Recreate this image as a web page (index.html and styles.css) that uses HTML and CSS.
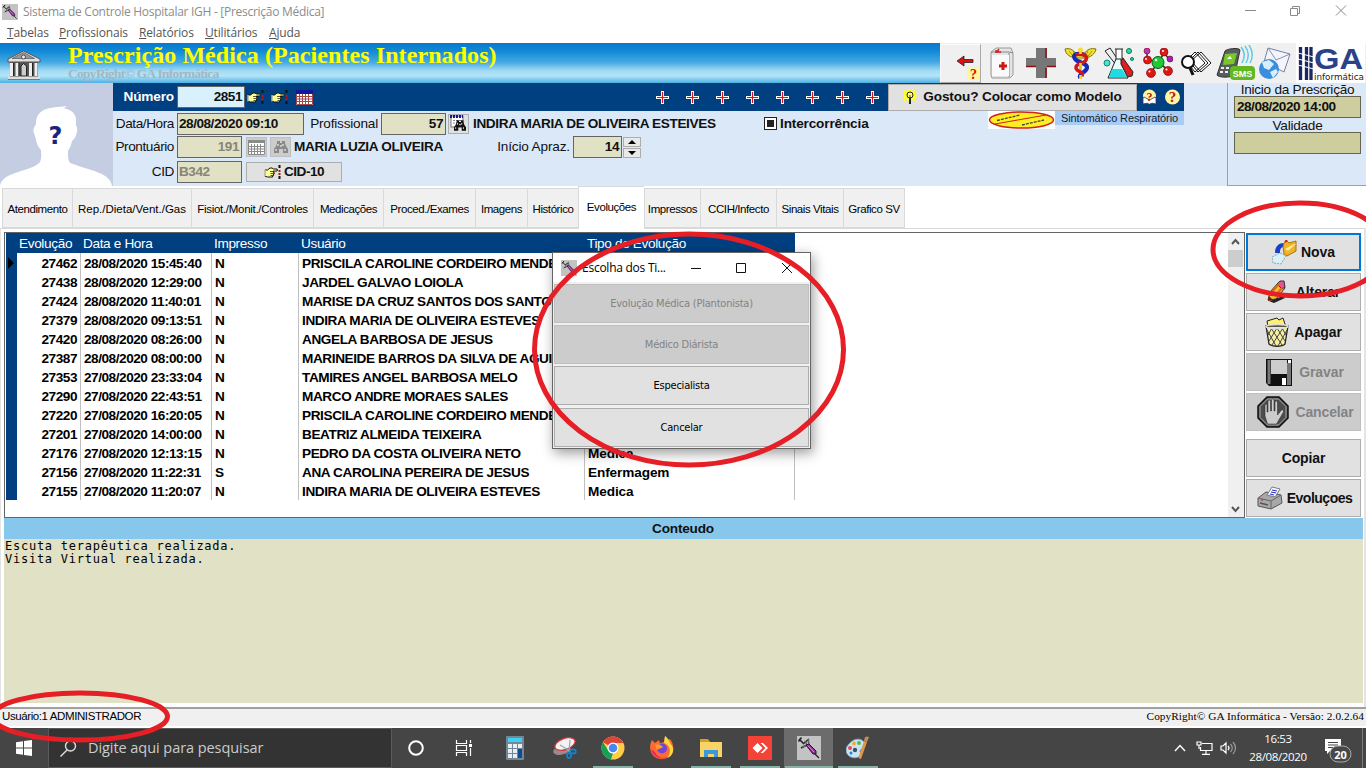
FILE: index.html
```
<!DOCTYPE html>
<html lang="pt-BR">
<head>
<meta charset="utf-8">
<title>Sistema de Controle Hospitalar IGH</title>
<link rel="stylesheet" href="styles.css">
</head>
<body>
<svg class="defs" width="0" height="0">
  <defs>
    <symbol id="syringe" viewBox="0 0 24 24">
      <rect width="24" height="24" fill="#c3c3c3"/>
      <path d="M2 3l5 5M4.500 1.500l-3 4M6 8l6-5M4 12l6-3" stroke="#222" stroke-width="1.500" fill="none"/>
      <path d="M8 5l2 4-5 2M11 3l1 5" stroke="#666" stroke-width="1.600" fill="none"/>
      <path d="M9 9l3-1 7 7v3h-3z" fill="#8b2f9b" stroke="#2a1030" stroke-width="1"/>
      <path d="M11 9.500l6 6.500" stroke="#e58bd8" stroke-width="1"/>
      <path d="M18 18l4 4" stroke="#222" stroke-width="1.200"/>
    </symbol>
    <symbol id="hand" viewBox="0 0 17 14">
      <path d="M1 5h2.500L6 3h2l1.500 1H13l.5 1-.5 1H9.500v1.500h.7v1.500h-.7v1.500h-.8V12H3.500L2 11.500H1z" fill="#ffff90" stroke="#111" stroke-width="1"/>
      <path d="M6 6.500h3M6.500 8.500h3M6.500 10.500h2" stroke="#111" stroke-width=".7"/>
      <path d="M1 5v6.500" stroke="#fff"/>
      <path d="M15.500 0v4M15.500 11v3" stroke="#111" stroke-width="2" stroke-dasharray="3 1"/>
      <path d="M15.500 5v5" stroke="#b01818" stroke-width="2" stroke-dasharray="2 1"/>
    </symbol>
    <symbol id="plus" viewBox="0 0 13 13">
      <path d="M5 0h3v5h5v3H8v5H5V8H0V5h5z" fill="#fff"/>
      <path d="M6.500 1v11M1 6.500h11" stroke="#d01820" stroke-width="1.200"/>
    </symbol>
    <symbol id="calendar" viewBox="0 0 17 15">
      <rect width="17" height="15" fill="#fff"/>
      <path d="M.5 3v11.500h16V3M.5 6.500h16M.5 9h16M.5 11.500h16M3.500 4v10.500M6.500 4v10.500M9.500 4v10.500M12.500 4v10.500" stroke="currentColor" fill="none"/>
      <path d="M0 1.500h17" stroke="currentColor" stroke-width="3"/>
    </symbol>
    <symbol id="binoc" viewBox="0 0 14 12">
      <path d="M3 0h3v2h2V0h3v2l1 3 2 3v4H9V8H5v4H0V8l2-3 1-3z" fill="currentColor"/>
      <path d="M2 8v2M11 8v2M4 3v2M9 3v2M6 5h2" stroke="#fff" stroke-width="1"/>
    </symbol>
  </defs>
</svg>

<div class="titlebar">
  <svg class="app-icon" width="16" height="16"><use href="#syringe"/></svg>
  <span class="app-title">Sistema de Controle Hospitalar IGH - [Prescrição Médica]</span>
  <svg class="win-buttons" width="110" height="14" fill="none" stroke="#8a8a8a">
    <path d="M2 7.500h11M47.500 5.500h7v7h-7zM49.500 5.500v-2h7v7h-2M93 2.500l10 10M103 2.500l-10 10"/>
  </svg>
</div>
<nav class="menubar">
  <span class="m1"><u>T</u>abelas</span><span class="m2"><u>P</u>rofissionais</span><span class="m3"><u>R</u>elatórios</span><span class="m4"><u>U</u>tilitários</span><span class="m5"><u>A</u>juda</span>
</nav>

<div class="banner">
  <div class="banner-title">
    <svg class="building" width="34" height="30" viewBox="0 0 34 30">
      <path d="M1 9L16.500 1 33 9v3H1z" fill="#e0e0e0" stroke="#555"/>
      <path d="M5 8.500l11.500-6 11 6z" fill="#999" stroke="#444" stroke-width=".6"/>
      <circle cx="16.500" cy="7" r="2" fill="#eee" stroke="#333" stroke-width=".8"/>
      <rect x="3" y="12" width="28" height="15" fill="#555"/>
      <path d="M4.500 13v13M10 13v13M23.500 13v13M29 13v13" stroke="#eee" stroke-width="3"/>
      <path d="M6.500 13v13M12 13v13M25.500 13v13" stroke="#222"/>
      <path d="M14 26V16l2.500-2.500L19.500 16v10z" fill="#ccc" stroke="#222"/>
      <path d="M1 28h32" stroke="#ddd" stroke-width="3"/><path d="M1 29.500h32" stroke="#777"/>
    </svg>
    <div class="banner-text">
      <h1>Prescrição Médica (Pacientes Internados)</h1>
      <p>CopyRight© GA Informática</p>
    </div>
  </div>
  <div class="toolbar">
    <div class="help-btn">
      <svg width="40" height="38" viewBox="0 0 40 38">
        <path d="M16 16l7-5v3.500h9v3h-9V21z" fill="#e01010" stroke="#222" stroke-width=".8"/>
        <rect x="26" y="22" width="13" height="13" fill="#fff59a"/>
        <text x="29" y="34" class="q-serif">?</text>
      </svg>
    </div>
    <svg class="tool bag" width="26" height="32" viewBox="0 0 26 32">
      <path d="M2 5l5-4h15l2 5v22l-3 3H3l-1-3z" fill="#e4e4e4" stroke="#999"/>
      <path d="M2 5h18l4 1M20 6v24" stroke="#888" fill="none"/><path d="M3 8h17v21H3z" fill="#fafafa"/>
      <path d="M8 5l2-3M7 3v3M7 5h5" stroke="#c22" stroke-width="1.500"/>
      <path d="M14 15v8M10 19h8" stroke="#d01515" stroke-width="3"/>
    </svg>
    <svg class="tool cross" width="30" height="30" viewBox="0 0 30 30">
      <path d="M10 0h11v10h9v9H21v11H10V19H0v-9h10z" fill="#777"/>
      <path d="M20 0v10M0 18.500h10M20 20v10M21 18.500h9" stroke="#8b1010" stroke-width="1.500"/>
    </svg>
    <svg class="tool caduceus" width="33" height="33" viewBox="0 0 33 33" fill="none">
      <path d="M1 2c4-1 8 0 11 5l4 2 4-2c3-5 7-6 12-5-1 5-5 8-11 9H12C6 10 2 8 1 2z" fill="#f4e32a" stroke="#7a7000"/>
      <path d="M5 4l4 5M9 4l3 6M28 4l-4 5M24 4l-3 6" stroke="#8a8000" stroke-width=".8"/>
      <path d="M16.500 2v30" stroke="#d8b820" stroke-width="2.500"/>
      <path d="M21 8c-9-3-13 0-10 4s13 4 12 9-9 5-7 10" stroke="#1828b8" stroke-width="4"/>
      <path d="M12 8c7-3 12 1 10 5s-11 3-10 8 9 3 6 8" stroke="#d01818" stroke-width="3.500"/>
      <path d="M16.500 4v3M16.500 16v3M16.500 28v4" stroke="#f4dc30" stroke-width="2.500"/>
      <circle cx="16.500" cy="3" r="2.500" fill="#f4dc30"/>
    </svg>
    <svg class="tool flask" width="32" height="32" viewBox="0 0 32 32">
      <path d="M2 4l5-3 17 25-2 3z" fill="#eee" stroke="#222"/>
      <path d="M16 12l4-1 10 14-1 4-5 1z" fill="#e02020" stroke="#222"/>
      <path d="M12 2h8M13 2v11h6V2" fill="#fff" stroke="#222"/>
      <path d="M13 12L5 31h20L18 17v-5z" fill="#e8ffff" stroke="#222"/>
      <path d="M9 22l-3 8h18l-5-8z" fill="#20dce0"/>
      <circle cx="26" cy="4" r="2.500" fill="#30d8a0" stroke="#087858"/><circle cx="4" cy="16" r="3" fill="#50e0d0" stroke="#088878"/><circle cx="29" cy="12" r="1.500" fill="#30d8a0" stroke="#087858"/>
    </svg>
    <svg class="tool molecule" width="30" height="30" viewBox="0 0 30 30">
      <path d="M4 4v7l11 4 6-10M15 15L8 24M15 15l11 7M21 5l5 6" stroke="#333" fill="none" stroke-width="1.500"/>
      <g stroke="#700" stroke-width=".6"><circle cx="4" cy="3" r="3" fill="#c030c8"/><circle cx="4.500" cy="12" r="4" fill="#e01818"/><circle cx="21" cy="4" r="4" fill="#e01818"/><circle cx="27" cy="11" r="3" fill="#a020c0"/><circle cx="8" cy="25" r="4.500" fill="#d81818"/><circle cx="25" cy="23" r="4.500" fill="#d81818"/></g>
      <circle cx="15" cy="14.500" r="6" fill="#20c838" stroke="#086010"/>
      <g fill="#fff"><circle cx="13" cy="12" r="1.300"/><circle cx="3" cy="11" r="1"/><circle cx="20" cy="3" r="1"/><circle cx="6.500" cy="23.500" r="1"/><circle cx="23.500" cy="21.500" r="1"/></g>
    </svg>
    <svg class="tool papers" width="31" height="27" viewBox="0 0 31 27" fill="#fff" stroke="#111">
      <path d="M20 2l10 11-10 9L10 11zM17 2l10 11-10 9L8 11zM14 2l10 11-10 9L5 11z"/>
      <circle cx="7" cy="12" r="6" stroke-width="2"/><path d="M9 18l3 7" stroke-width="3"/>
    </svg>
    <svg class="tool sms" width="40" height="36" viewBox="0 0 40 36">
      <path d="M9 6c1-2 14-4 15-1l-5 24c-2 4-16 4-18 1z" fill="#555d60" stroke="#333"/>
      <path d="M9 9l12-1-3 11-11 1z" fill="#7ac828"/><path d="M11 14l3-3 2 3z" fill="#fff"/>
      <path d="M5 23h3M10 23h3M4 27h3M9 27h3" stroke="#eee" stroke-width="2"/>
      <path d="M25 2q6 7 1 16M29 1q6 8 1 17M33 0q6 9 1 18" fill="none" stroke="#62cbe4" stroke-width="1.500"/>
      <rect x="14" y="21" width="25" height="14" rx="4" fill="#62b820"/>
      <text x="26.500" y="32" class="sms-text">SMS</text>
    </svg>
    <svg class="tool mail" width="33" height="33" viewBox="0 0 33 33">
      <path d="M10 1l22 6-6 18L6 15z" fill="#f4f4fc" stroke="#7780a0"/><path d="M10 1l8 12 14-6" fill="none" stroke="#8890b0"/>
      <circle cx="11" cy="22" r="10" fill="#3b8dde"/><path d="M4 15l7-2 5 4-5 6-5-2zM12 25l6-3 2 3-5 6z" fill="#d8eefa"/>
    </svg>
    <svg class="tool ga" width="69" height="40" viewBox="0 0 69 40">
      <rect width="69" height="40" fill="#fff"/>
      <path d="M4.500 4v33M10.500 4v33M15 4v33" stroke="#1c2860" stroke-width="3.300"/>
      <path d="M2 10l16 4M2 16l16 4M2 22l16 4" stroke="#fff"/>
      <text x="18" y="26" class="ga-text" textLength="49" lengthAdjust="spacingAndGlyphs">GA</text>
      <text x="18" y="37" class="ga-sub" textLength="50" lengthAdjust="spacingAndGlyphs">informática</text>
    </svg>
  </div>
</div>

<header class="patient">
  <div class="photo">
    <svg width="113" height="103" viewBox="0 0 113 103">
      <rect width="113" height="103" fill="#c4cde1"/>
      <path d="M0 103c2-15 32-14 40-24 2-4 1-9 1-12-5-5-5-12-6-14-3-7-1-8 1-12C36 32 40 25 58 24l9-1-3 2c10 3 13 7 12 17 3 5 0 13-4 16-1 5-3 8-4 10 0 8 0 12 5 13 16 6 38 9 39 22z" fill="#fff"/>
      <text x="55.500" y="61" class="photo-q">?</text>
    </svg>
  </div>
  <div class="form">
    <div class="number-bar">
      <label class="lbl bold">Número</label>
      <div class="field cyan num">2851</div>
      <svg class="hand1" width="17" height="14"><use href="#hand"/></svg>
      <svg class="hand2" width="17" height="14"><use href="#hand"/></svg>
      <svg class="cal1" width="17" height="15"><use href="#calendar"/><rect width="17" height="4" fill="#1018a0"/></svg>
      <div class="plusses">
        <svg width="13" height="13"><use href="#plus"/></svg><svg width="13" height="13"><use href="#plus"/></svg><svg width="13" height="13"><use href="#plus"/></svg><svg width="13" height="13"><use href="#plus"/></svg><svg width="13" height="13"><use href="#plus"/></svg><svg width="13" height="13"><use href="#plus"/></svg><svg width="13" height="13"><use href="#plus"/></svg><svg width="13" height="13"><use href="#plus"/></svg>
      </div>
      <button class="model-btn">
        <svg width="14" height="16" viewBox="0 0 14 16"><path d="M7 0l2 2 3-1v3l2 3-2 2v3L9 11 7 13 4 11 1 12V9L0 7l1-3V1l3 1z" fill="#ffff30"/><circle cx="7" cy="6" r="3" fill="#ffff80" stroke="#222"/><path d="M7 9v6" stroke="#222" stroke-width="2"/><path d="M7 6v3" stroke="#222" stroke-width=".8"/></svg>
        <span>Gostou? Colocar como Modelo</span>
      </button>
      <svg class="tip" width="38" height="16" viewBox="0 0 38 16">
        <circle cx="7.500" cy="7" r="6.500" fill="#fff6a0"/><path d="M1 9l1-1 5.500 3L13 8l1 1v6l-4-.8-2.500 1-2.500-1L1 15z" fill="#fff" stroke="#335" stroke-width=".8"/>
        <circle cx="30.500" cy="8" r="7.500" fill="#fff6a0"/>
        <text x="7.500" y="11.500" class="tip-q small">?</text><text x="30.500" y="13" class="tip-q big">?</text>
      </svg>
    </div>
    <div class="form-body">
      <div class="row row-date">
        <label class="lbl">Data/Hora</label><div class="field date">28/08/2020 09:10</div>
        <label class="lbl prof">Profissional</label><div class="field prof-f">57</div>
        <div class="mini-btn"><svg width="18" height="17" viewBox="0 0 18 17"><rect x="1" y="1" width="12" height="11" fill="#fff" stroke="#777"/><path d="M0 1.500h13" stroke="#1018a0" stroke-width="3" stroke-dasharray="2 1"/><path d="M3 5.500h9M3 8h9" stroke="#888" stroke-dasharray="2 1"/><svg x="4" y="5" width="12" height="11"><use href="#binoc"/></svg></svg></div>
        <span class="name">INDIRA MARIA DE OLIVEIRA ESTEIVES</span>
        <span class="check"></span><span class="inter">Intercorrência</span>
      </div>
      <div class="row row-pront">
        <label class="lbl">Prontuário</label><div class="field off pront">191</div>
        <div class="mini-btn dis"><svg width="17" height="15"><use href="#calendar"/></svg></div>
        <div class="mini-btn dis second"><svg width="14" height="12"><use href="#binoc"/></svg></div>
        <span class="name patient-name">MARIA LUZIA OLIVEIRA</span>
        <label class="lbl apraz">Início Apraz.</label><div class="field ap-f">14</div>
        <div class="spin"><i class="up"></i><i class="down"></i></div>
      </div>
      <div class="row row-cid">
        <label class="lbl">CID</label><div class="field off cid">B342</div>
        <button class="cid-btn"><svg width="17" height="14"><use href="#hand"/></svg><span>CID-10</span></button>
      </div>
      <div class="resp">
        <svg width="67" height="18" viewBox="0 0 67 18"><rect width="67" height="18" fill="#fff"/><ellipse cx="33.500" cy="9" rx="32" ry="8" fill="#ffee20" stroke="#d02020" stroke-width="1.500"/><path d="M7 13L58 4" stroke="#d02020"/><path d="M9 9.500L32 4M34 14l22-5" stroke="#444" stroke-width="1.300" stroke-dasharray="3 1"/></svg>
        <span>Sintomático Respiratório</span>
      </div>
    </div>
  </div>
  <aside class="period">
    <p>Inicio da Prescrição</p><div class="khaki">28/08/2020 14:00</div>
    <p class="val">Validade</p><div class="khaki"></div>
  </aside>
</header>

<div class="tabs">
  <div class="tab w70">Atendimento</div><div class="tab w119">Rep./Dieta/Vent./Gas</div><div class="tab w122">Fisiot./Monit./Controles</div><div class="tab w70b">Medicações</div><div class="tab w92">Proced./Exames</div><div class="tab w52">Imagens</div><div class="tab w51">Histórico</div><div class="tab active">Evoluções</div><div class="tab w56">Impressos</div><div class="tab w76">CCIH/Infecto</div><div class="tab w67">Sinais Vitais</div><div class="tab w61">Grafico SV</div>
</div>

<main class="page">
  <div class="upper">
    <div class="gridbox">
      <table class="evolutions">
        <thead><tr><th class="gut"></th><th class="c1">Evolução</th><th class="c2">Data e Hora</th><th class="c3">Impresso</th><th class="c4">Usuário</th><th class="c5">Tipo de Evolução</th></tr></thead>
        <tbody>
          <tr><td class="gut"><i></i></td><td>27462</td><td>28/08/2020 15:45:40</td><td>N</td><td>PRISCILA CAROLINE CORDEIRO MENDES</td><td></td></tr>
          <tr><td class="gut"></td><td>27438</td><td>28/08/2020 12:29:00</td><td>N</td><td>JARDEL GALVAO LOIOLA</td><td></td></tr>
          <tr><td class="gut"></td><td>27424</td><td>28/08/2020 11:40:01</td><td>N</td><td>MARISE DA CRUZ SANTOS DOS SANTOS</td><td></td></tr>
          <tr><td class="gut"></td><td>27379</td><td>28/08/2020 09:13:51</td><td>N</td><td>INDIRA MARIA DE OLIVEIRA ESTEVES</td><td></td></tr>
          <tr><td class="gut"></td><td>27420</td><td>28/08/2020 08:26:00</td><td>N</td><td>ANGELA BARBOSA DE JESUS</td><td></td></tr>
          <tr><td class="gut"></td><td>27387</td><td>28/08/2020 08:00:00</td><td>N</td><td>MARINEIDE BARROS DA SILVA DE AGUIAR</td><td></td></tr>
          <tr><td class="gut"></td><td>27353</td><td>27/08/2020 23:33:04</td><td>N</td><td>TAMIRES ANGEL BARBOSA MELO</td><td></td></tr>
          <tr><td class="gut"></td><td>27290</td><td>27/08/2020 22:43:51</td><td>N</td><td>MARCO ANDRE MORAES SALES</td><td></td></tr>
          <tr><td class="gut"></td><td>27220</td><td>27/08/2020 16:20:05</td><td>N</td><td>PRISCILA CAROLINE CORDEIRO MENDES</td><td></td></tr>
          <tr><td class="gut"></td><td>27201</td><td>27/08/2020 14:00:00</td><td>N</td><td>BEATRIZ ALMEIDA TEIXEIRA</td><td></td></tr>
          <tr><td class="gut"></td><td>27176</td><td>27/08/2020 12:13:15</td><td>N</td><td>PEDRO DA COSTA OLIVEIRA NETO</td><td>Medica</td></tr>
          <tr><td class="gut"></td><td>27156</td><td>27/08/2020 11:22:31</td><td>S</td><td>ANA CAROLINA PEREIRA DE JESUS</td><td>Enfermagem</td></tr>
          <tr><td class="gut"></td><td>27155</td><td>27/08/2020 11:20:07</td><td>N</td><td>INDIRA MARIA DE OLIVEIRA ESTEVES</td><td>Medica</td></tr>
        </tbody>
      </table>
      <div class="scroll">
        <svg width="15" height="16" fill="none" stroke="#555" stroke-width="2"><path d="M4 11l3.500-4 3.500 4"/></svg>
        <div class="thumb"></div>
        <svg class="dn" width="15" height="16" fill="none" stroke="#555" stroke-width="2"><path d="M4 6l3.500 4L11 6"/></svg>
      </div>
    </div>
    <div class="actions">
      <button class="focus"><svg width="25" height="25" viewBox="0 0 25 25"><path d="M3 13c0-7 4-10 9-10v4c-3 0-4 2-4 6z" fill="#1840c8"/><path d="M11 6l1-3 3-2 2 2 7-2v10l-9 5-3-2z" fill="#f0b428" stroke="#a87010"/><path d="M13 9l9-5 2 0-8 7z" fill="#ffe898"/><path d="M13 2l2-2" stroke="#d02020" stroke-width="2"/><path d="M0 17l8-4 6 3-5 8-8-1z" fill="#d8f0f8" stroke="#88a8b0" stroke-dasharray="2 1"/></svg><span>Nova</span></button>
      <button class="alt"><svg width="19" height="24" viewBox="0 0 19 24"><path d="M2 21l14-5 2 2-11 5z" fill="#222"/><path d="M1 20L3 12 11 3h5l2 5-9 11z" fill="#f0c030" stroke="#333"/><path d="M10 4l3-3h4l1 6-3 2z" fill="#e85090" stroke="#333"/><path d="M5 12l7-8M8 16l7-8" stroke="#e06818" stroke-width="2"/><path d="M1 21l1-5 4 4z" fill="#7b1b10"/></svg><span>Alterar</span></button>
      <button><svg width="25" height="31" viewBox="0 0 25 31"><path d="M3 10L2 4l10-3 2 2 4-2 3 9z" fill="#fff070" stroke="#222"/><path d="M1 9h22l-3 18c-3 3-13 3-16 0z" fill="#f4f0a0" stroke="#222" stroke-width="1.300"/><path d="M2 13l9 16M6 11l11 17M12 11l8 13M17 11l4 7M22 13l-9 16M18 11L7 28M12 11L4 24M7 11l-4 7" stroke="#444" stroke-width="1"/><ellipse cx="12" cy="9.500" rx="11" ry="2" fill="none" stroke="#ddd" stroke-width="1.500"/></svg><span>Apagar</span></button>
      <button class="off save"><svg width="26" height="27" viewBox="0 0 26 27"><path d="M0 0h26v27H3l-3-3z" fill="#111"/><path d="M1.500 1h3v24h-3zM21 4h4v22h-4z" fill="#777"/><path d="M5 1h16v14H5z" fill="#ccc"/><rect x="22" y="1" width="3" height="3" fill="#fff"/><rect x="16" y="19" width="4" height="7" fill="#fff"/></svg><span>Gravar</span></button>
      <button class="off stop"><svg width="32" height="32" viewBox="0 0 32 32"><path d="M10 1h12l9 9v12l-9 9H10l-9-9V10z" fill="#4c4c4c" stroke="#111" stroke-width="1.500"/><path d="M10.500 3h11l7.500 7.500v11L21.500 29h-11L3 21.500v-11z" fill="none" stroke="#aaa"/><path d="M8 20V9q1-2 2 0v7h1V5q1-2 2.500 0v10h1V4q1-2 2.500 0v11h1V6q1-2 2.500 0v13l4-5q3-1 2 2l-7 12h-9z" fill="#ccc" stroke="#222" stroke-width=".5"/></svg><span>Cancelar</span></button>
      <button class="copy"><span>Copiar</span></button>
      <button class="print"><svg width="26" height="24" viewBox="0 0 26 24"><path d="M1 12l8-6 15 3 1 8-11 6L1 20z" fill="#a8a8a8" stroke="#555"/><path d="M1 12l13 3 10-6M14 15v8" stroke="#666" fill="none"/><path d="M10 9l5-8 8 2-5 8z" fill="#fff" stroke="#778"/><path d="M14 6l5 1M15 4l5 1M13 8l4 1" stroke="#2030c8" stroke-width="1.200"/><path d="M3 17l8 2" stroke="#555" stroke-width="1.500"/><path d="M4 14h2" stroke="#c22"/></svg><span>Evoluçoes</span></button>
    </div>
  </div>
  <div class="content-head">Conteudo</div>
  <pre class="memo">Escuta terapêutica realizada.
Visita Virtual realizada.</pre>
</main>

<footer class="status"><span>Usuário:1 ADMINISTRADOR</span><span class="ver">CopyRight© GA Informática - Versão: 2.0.2.64</span></footer>

<div class="taskbar">
  <div class="start"><svg width="16" height="16" fill="#fff"><path d="M0 2.200l7-1V7.500H0zM8 1l8-1v7.500H8zM0 8.500h7v6.300l-7-1zM8 8.500h8V16l-8-1z"/></svg></div>
  <div class="search"><svg width="17" height="17" fill="none" stroke="#ddd" stroke-width="1.400"><circle cx="10.500" cy="6" r="5"/><path d="M7 10l-6.500 6.500"/></svg><span>Digite aqui para pesquisar</span></div>
  <div class="apps">
    <div class="app"><svg width="18" height="18"><circle cx="9" cy="9" r="6.800" fill="none" stroke="#fff" stroke-width="2"/></svg></div>
    <div class="app"><svg width="18" height="16" fill="none" stroke="#fff" stroke-width="1.200"><path d="M1.500 0v3.500h10V0M1.500 16v-3.500h10V16M1.500 5.500h10v5h-10zM15.500 0v3M15.500 8v8"/><path d="M14 4h3v3h-3z" fill="#fff" stroke="none"/></svg></div>
    <div class="app"><svg width="18" height="24"><rect width="18" height="24" rx="1" fill="#728797"/><rect x="2" y="2" width="14" height="4" fill="#3dd0f4"/><path d="M2 8h4v4H2zM7 8h4v4H7zM12 8h4v4h-4zM2 13h4v4H2zM7 13h4v4H7zM2 18h4v4H2zM7 18h4v4H7z" fill="#e8eef2"/><path d="M12 13h4v9h-4z" fill="#104a90"/></svg></div>
    <div class="app"><svg width="24" height="22"><ellipse cx="9" cy="13" rx="9" ry="4.500" fill="#a08888" transform="rotate(-15 9 13)"/><ellipse cx="12" cy="7" rx="10.500" ry="5.500" fill="#f3f3f5" stroke="#d83838" stroke-width="1.200" transform="rotate(-20 12 7)"/><path d="M7 8l10 6M17 3l-1 12" stroke="#9aa8b4" stroke-width="1.300"/><g fill="none" stroke="#1880c8" stroke-width="1.800"><ellipse cx="20" cy="14.500" rx="2.800" ry="2"/><ellipse cx="16" cy="18.500" rx="2" ry="2.500"/></g></svg></div>
    <div class="app open"><svg width="24" height="24" viewBox="0 0 24 24"><circle cx="12" cy="12" r="11.500" fill="#ffce45"/><path d="M12 12L2 6.200A11.500 11.500 0 0 1 22.200 7H12z" fill="#e04438"/><path d="M2 6.200L7.500 15l4.500 2-2 6.400A11.500 11.500 0 0 1 2 6.200z" fill="#16a05a"/><circle cx="12" cy="12" r="5.500" fill="#fff"/><circle cx="12" cy="12" r="4.300" fill="#4688f0"/></svg></div>
    <div class="app"><svg width="24" height="24" viewBox="0 0 24 24"><path d="M2 4l3 3 4-3 1 3 4-1 1-6c2 1 2 3 3 4l2-1c4 5 4 11 2 14-4 8-16 8-20 1C-1 13 0 8 2 4z" fill="#ff6a30"/><path d="M15 0c5 4 4 6 7 10s0 11-5 12c5-6 3-13-3-15z" fill="#ffd83c"/><path d="M1 13c2 10 12 11 17 8-5 2-11 0-13-5z" fill="#f02858"/><circle cx="12" cy="12.500" r="5" fill="#7048d8"/><path d="M5 9c4-2 6 0 8 2-2 2-4 1-6 3z" fill="#ff9830"/></svg></div>
    <div class="app open"><svg width="22" height="19"><path d="M0 1h8l2 2h12v15H0z" fill="#f8d468"/><path d="M0 0h8l2 3H0z" fill="#d89c28"/><path d="M4 18v-7h14v7h-4v-3H8v3z" fill="#3c98dc"/></svg></div>
    <div class="app open"><svg width="24" height="24"><path d="M0 0h24v24H0z" fill="#f44336"/><path d="M4.500 12L9.500 7l5 5-5 5zM12.500 7h2.500l5 5-5 5h-2.500l5-5z" fill="#fff"/></svg></div>
    <div class="app open current"><svg width="24" height="24"><use href="#syringe"/></svg></div>
    <div class="app open"><svg width="24" height="24"><path d="M3 8C9 0 19 3 19 9c0 4-5 4-5 6s3 3 0 5c-5 4-14 1-14-6 0-2 1-4 3-6z" fill="#c8e4f4" stroke="#78a8c8"/><circle cx="4" cy="12" r="2" fill="#e05048"/><circle cx="8" cy="7.500" r="2" fill="#f0b028"/><circle cx="13" cy="7" r="2" fill="#58b848"/><circle cx="9" cy="14" r="2.200" fill="#405060"/><circle cx="5" cy="17" r="1.500" fill="#3878d0"/><path d="M18 5l3 1-6 17q-3 0-2-3z" fill="#e09848"/><path d="M18 5l1-4q3-1 4 0l-2 5z" fill="#c88858"/></svg></div>
  </div>
  <div class="tray">
    <svg class="chev" width="12" height="8" fill="none" stroke="#fff" stroke-width="1.400"><path d="M1 7l5-5.500L11 7"/></svg>
    <svg class="net" width="17" height="14" fill="none" stroke="#fff" stroke-width="1.200"><path d="M6 2.500h10v7H4.500V6M10 10v3M6 13.400h8M1 1h4v3H1zM3 4v4"/></svg>
    <svg class="vol" width="17" height="14" fill="none" stroke="#fff" stroke-width="1.200"><path d="M1 5h2l3-3v10L3 9H1zM8 5q2 2 0 4"/><path d="M10.500 3q3.500 4 0 8M13 1q5 6 0 12" stroke="#999"/></svg>
    <div class="clock"><span>16:53</span><span>28/08/2020</span></div>
    <svg class="note" width="28" height="24"><path d="M0 0h16v12H5l-3 3v-3H0z" fill="#fff"/><path d="M3 3.500h10M3 6h10M3 8.500h7" stroke="#444"/><rect x="5" y="7" width="21" height="16" rx="8" fill="#484848" stroke="#aaa"/><text x="15.500" y="19.500" class="note-n">20</text></svg>
    <div class="peek"></div>
  </div>
</div>

<section class="dialog">
  <div class="dlg-title"><svg width="16" height="16"><use href="#syringe"/></svg><span>Escolha dos Ti...</span>
    <svg class="dlg-win" width="104" height="12" fill="none" stroke="#111"><path d="M1 6.500h10M46.500 1.500h9v9h-9zM92 1l10 10M102 1L92 11"/></svg></div>
  <button class="off">Evolução Médica (Plantonista)</button>
  <button class="off">Médico Diárista</button>
  <button>Especialista</button>
  <button class="last">Cancelar</button>
</section>

<svg class="marks" width="1366" height="768" fill="none" stroke="#e61e25" stroke-width="5">
  <ellipse cx="689" cy="349.500" rx="154.500" ry="115.500"/>
  <ellipse cx="1300" cy="249.500" rx="87" ry="46.500"/>
  <ellipse cx="80" cy="716.500" rx="87.500" ry="23.500"/>
</svg>
</body>
</html>
```
FILE: styles.css
```
* { box-sizing: border-box; }
body { margin: 0; width: 1366px; height: 768px; overflow: hidden; background: #fff; font: 13.6px/16px "Liberation Sans", Arial, sans-serif; color: #111; }
svg { display: block; flex: none; }
button { font: inherit; color: inherit; margin: 0; padding: 0; display: flex; align-items: center; justify-content: center; background: #e1e1e1; border: 1px solid #adadad; white-space: nowrap; }
p, h1, pre { margin: 0; }
.defs { position: absolute; }

.titlebar { height: 23px; display: flex; align-items: center; padding-left: 2px; font: 12px/16px "Open Sans", sans-serif; color: #8c8c8c; }
.app-title { margin-left: 5px; letter-spacing: -.28px; }
.win-buttons { margin-left: auto; margin-right: 13px; margin-top: -3px; }
.menubar { height: 20px; display: flex; padding-left: 7px; font: 12px/20px "Open Sans", sans-serif; color: #555; letter-spacing: -.15px; }
.menubar span { flex: none; }
.m1 { width: 52px; } .m2 { width: 80px; } .m3 { width: 66px; } .m4 { width: 64px; }

.banner { height: 40px; display: flex; background: #f0f0f0; }
.banner-title { width: 940px; display: flex; background: linear-gradient(#0878cc 0, #1189d6 20%, #45a9e3 48%, #a4dcf5 70%, #b4e4f7 82%, #70c2ec 94%, #4bb0e4 100%); }
.building { margin: 7px 0 0 7px; }
.banner-text { margin-left: 27px; font-family: "Liberation Serif", "Times New Roman", serif; white-space: nowrap; }
.banner h1 { font-size: 24px; line-height: 24px; font-weight: bold; color: #ff0; letter-spacing: .08px; }
.banner p { font-size: 13.33px; line-height: 14px; color: #a4b6c2; font-weight: bold; letter-spacing: -.62px; }
.toolbar { flex: 1; display: flex; align-items: center; }
.help-btn { width: 41px; height: 39px; border: 1px solid #fafafa; border-right-color: #aaa; border-bottom-color: #aaa; }
.q-serif { font: bold 14px "Liberation Serif", serif; fill: #d01010; }
.bag { margin-left: 8px; } .cross { margin-left: 11px; } .caduceus { margin-left: 8px; } .flask { margin-left: 6px; }
.molecule { margin-left: 8px; } .papers { margin-left: 8px; } .sms { margin-left: 4px; } .mail { margin-left: 2px; } .ga { margin-left: 5px; }
.sms-text { font: bold 9px "Liberation Sans", sans-serif; fill: #fff; text-anchor: middle; }
.ga-text { font: bold 30px "Liberation Sans", sans-serif; fill: #2a4288; }
.ga-sub { font: 9px "DejaVu Sans", sans-serif; fill: #222; }

.patient { height: 103px; display: flex; background: #dbe8f8; }
.photo { width: 113px; }
.photo-q { font: bold 24px "DejaVu Sans", sans-serif; fill: #1a237e; text-anchor: middle; }
.form { width: 1071px; }
.number-bar { height: 28px; display: flex; align-items: center; background: #004080; }
.lbl { width: 61px; text-align: right; flex: none; margin-right: 3px; letter-spacing: -.42px; white-space: nowrap; }
.lbl.bold { font-weight: bold; color: #fff; letter-spacing: -.15px; }
.field { height: 22px; border: 1px solid #646464; background: #e1e1c6; font-weight: bold; letter-spacing: -.48px; line-height: 19px; padding: 0 2px 0 1px; white-space: nowrap; }
.field.cyan { background: #d9f1fc; line-height: 20px; }
.field.off { color: #868678; }
.num { width: 68px; text-align: right; }
.hand1 { margin-left: 2px; } .hand2 { margin-left: 7px; } .cal1 { margin-left: 8px; color: #a04848; }
.plusses { display: flex; gap: 17px; margin-left: 343px; }
.model-btn { width: 249px; height: 27px; margin-left: 9px; font-weight: bold; gap: 6px; letter-spacing: -.12px; }
.tip { margin-left: 5px; }
.tip-q { font: bold 15px "Liberation Serif", serif; fill: #c01010; text-anchor: middle; }
.tip-q.small { font-size: 12px; }
.form-body { display: grid; grid-template-columns: 875px 196px; grid-template-rows: 22px 24px 26px; padding-top: 2px; height: 75px; }
.row { grid-column: 1; display: flex; align-items: center; }
.row-date { margin-top: -1px; }
.date { width: 127px; }
.lbl.prof { width: 70px; margin-left: 4px; margin-right: 3px; letter-spacing: -.2px; }
.prof-f { width: 65px; text-align: right; }
.mini-btn { width: 21px; height: 20px; margin-left: 2px; border: 1px solid #adadad; background: #e1e1e1; display: grid; place-items: center; }
.mini-btn.dis { background: #ccc; border-color: #bfbfbf; color: #8a8a8a; margin-left: 4px; }
.mini-btn.dis.second { margin-left: 3px; }
.name { font-weight: bold; margin-left: 4px; letter-spacing: -.36px; width: 291px; white-space: nowrap; }
.check { width: 13px; height: 13px; border: 1px solid #222; background: #222; box-shadow: inset 0 0 0 2px #fff; }
.inter { font-weight: bold; margin-left: 3px; letter-spacing: -.15px; }
.pront { width: 65px; text-align: right; }
.patient-name { width: 200px; margin-left: 3px; letter-spacing: -.32px; }
.lbl.apraz { width: 76px; letter-spacing: -.15px; }
.ap-f { width: 49px; text-align: right; }
.spin { width: 18px; margin-left: 1px; display: grid; gap: 1px; }
.spin i { height: 10px; border: 1px solid #adadad; background: #e9e9e9; display: grid; place-items: center; }
.spin i::before { content: ""; border: 4px solid transparent; border-top: 0; border-bottom: 4px solid #000; }
.spin .down::before { transform: rotate(180deg); }
.cid { width: 65px; }
.cid-btn { width: 96px; height: 20px; margin-left: 4px; font-weight: bold; gap: 3px; letter-spacing: -.5px; }
.resp { grid-column: 2; grid-row: 1; display: flex; margin-top: -2px; font-size: 11px; line-height: 15px; }
.resp span { width: 129px; height: 14px; background: #a8ccf3; text-align: center; color: #123; white-space: nowrap; letter-spacing: -.12px; }
.period { width: 139px; margin-left: 43px; border: 1px solid #a0a0a0; border-right: 0; border-top: 0; padding: 0 5px 0 6px; text-align: center; line-height: 13px; }
.period p { letter-spacing: -.25px; white-space: nowrap; }
.khaki { height: 22px; border: 1px solid #646450; background: #cdcd9e; text-align: left; font-weight: bold; line-height: 20px; padding-left: 2px; letter-spacing: -.5px; }
.period p.val { padding: 1px 0 0; }

.tabs { height: 42px; padding: 2px 0 0 2px; display: flex; }
.tab { height: 40px; border: 1px solid #d9d9d9; border-right-width: 0; background: #f0f0f0; font-size: 11.5px; line-height: 40px; letter-spacing: -.42px; text-align: center; color: #000; white-space: nowrap; }
.tab:last-child { border-right-width: 1px; }
.w70 { width: 70px; } .w119 { width: 119px; } .w122 { width: 122px; } .w70b { width: 70px; } .w92 { width: 92px; } .w52 { width: 52px; } .w51 { width: 51px; } .w56 { width: 56px; } .w76 { width: 76px; } .w67 { width: 67px; } .w61 { width: 62px; }
.tab.w119 { letter-spacing: 0; } .tab.w122 { letter-spacing: -.3px; }
.tab.active { width: 66px; height: 43px; margin-top: -2px; background: #fff; border-bottom: 0; z-index: 1; }

.page { height: 479px; border-top: 1px solid #d9d9d9; border-left: 1px solid #e4e4e4; border-right: 2px solid #e4e4e4; padding: 3px 1px 0 3px; }
.upper { display: flex; height: 286px; }
.gridbox { width: 1241px; border: 1px solid #646464; display: flex; justify-content: space-between; padding-left: 1px; }
.evolutions { border-collapse: separate; border-spacing: 0; table-layout: fixed; width: 789px; height: 267px; font-weight: bold; color: #000; }
.evolutions th { background: #004080; color: #fff; font-weight: normal; text-align: left; height: 20px; line-height: 18px; padding: 2px 0 0 2px; letter-spacing: -.35px; }
.evolutions td { height: 19px; line-height: 17px; padding: 2px 0 0 3px; border-right: 1px solid #c0c0c0; letter-spacing: -.46px; white-space: nowrap; overflow: hidden; }
.evolutions td:nth-child(2) { text-align: right; padding-right: 3px; }
.evolutions td:nth-child(4), .evolutions td:nth-child(5) { letter-spacing: -.4px; }
.evolutions td:nth-child(6) { letter-spacing: -.1px; }
.evolutions td.gut, .evolutions th.gut { width: 11px; background: #004080; border: 0; padding: 0; }
.gut i { display: block; margin-left: 2px; width: 0; border: 6px solid transparent; border-left-color: #000; border-right: 0; }
.c1 { width: 64px; } .c2 { width: 131px; } .c3 { width: 87px; } .c4 { width: 286px; } .c5 { width: 210px; }
.scroll { width: 16px; background: #f0f0f0; display: flex; flex-direction: column; }
.thumb { height: 17px; width: 15px; background: #cdcdcd; margin-top: 1px; }
.scroll .dn { margin-top: auto; }
.actions { width: 116px; margin-left: 1px; display: flex; flex-direction: column; gap: 2px; padding-top: 1px; font-size: 14px; font-weight: bold; }
.actions button { height: 38px; width: 115px; gap: 4px; letter-spacing: -.1px; }
.actions .focus { border: 2px solid #0078d7; }
.actions .off, .dialog .off { background: #ccc; border-color: #bfbfbf; color: #838383; }
.actions .alt { gap: 10px; } .actions .off { gap: 7px; } .actions .save { padding-left: 3px; } .actions .stop { padding-left: 3px; letter-spacing: -.15px; } .actions .print { letter-spacing: -.5px; padding-left: 2px; }
.actions .copy { margin-top: 6px; }
.content-head { height: 21px; background: #87c7eb; font-weight: bold; line-height: 21px; letter-spacing: -.2px; text-align: center; padding-right: 1px; }
.memo { height: 164px; background: #e1e1c6; font: 12px/13px "DejaVu Sans Mono", monospace; letter-spacing: .75px; padding: 1px 0 0 1px; color: #000; }

.status { height: 21px; border-top: 2px solid #a0a0a0; border-bottom: 2px solid #fff; background: #f0f0f0; display: flex; justify-content: space-between; padding: 0 2px; font-size: 11.5px; line-height: 15px; letter-spacing: -.4px; color: #000; }
.ver { font: 11.3px/15px "Liberation Serif", serif; letter-spacing: .06px; }

.taskbar { height: 40px; background: #454545; display: flex; color: #fff; font-family: "Open Sans", sans-serif; }
.start { width: 48px; display: grid; place-items: center; }
.search { width: 344px; border: 1px solid #5a5a5a; background: #333; display: flex; align-items: center; padding-left: 11px; font-size: 14.5px; color: #ccc; gap: 11px; letter-spacing: -.06px; }
.apps { display: flex; }
.app { width: 49px; height: 40px; display: grid; place-items: center; }
.app:first-child { width: 48px; } .app:nth-child(2) { width: 48px; } .app:nth-child(3) { width: 54px; } .app:nth-child(4) { width: 46px; }
.app.open { background: linear-gradient(#83b3a6, #83b3a6) center bottom / 40px 2px no-repeat; }
.app.current { background: linear-gradient(#83b3a6, #83b3a6) center bottom / 48px 2px no-repeat #6c6c6c; }
.tray { margin-left: auto; display: flex; align-items: center; }
.net { margin-left: 10px; } .vol { margin-left: 7px; }
.clock { width: 70px; margin-left: 6px; font-size: 11.5px; line-height: 18px; text-align: center; display: grid; letter-spacing: -.35px; }
.note { margin-left: 12px; margin-top: 6px; margin-right: 9px; }
.note-n { font: bold 11px "Open Sans", sans-serif; fill: #fff; text-anchor: middle; }
.peek { width: 4px; height: 40px; border-left: 1px solid #7c7c7c; }

.dialog { position: absolute; left: 552px; top: 252px; width: 259px; height: 197px; border: 1px solid #666; background: #f0f0f0; box-shadow: 2px 4px 12px rgba(0,0,0,.4); display: flex; flex-direction: column; align-items: center; gap: 2px; font: 11px/14px "DejaVu Sans Condensed", "DejaVu Sans", sans-serif; color: #000; }
.dlg-title { width: 257px; height: 29px; background: #fff; display: flex; align-items: center; padding-left: 8px; font: 12px/16px "Open Sans", sans-serif; letter-spacing: -.25px; }
.dlg-title span { margin-left: 5px; }
.dlg-win { margin-left: auto; margin-right: 16px; }
.dialog button { width: 255px; height: 39px; flex: none; padding-top: 1px; letter-spacing: -.22px; }
.dialog .last { margin-top: 1px; }
.marks { position: absolute; left: 0; top: 0; pointer-events: none; }
```
